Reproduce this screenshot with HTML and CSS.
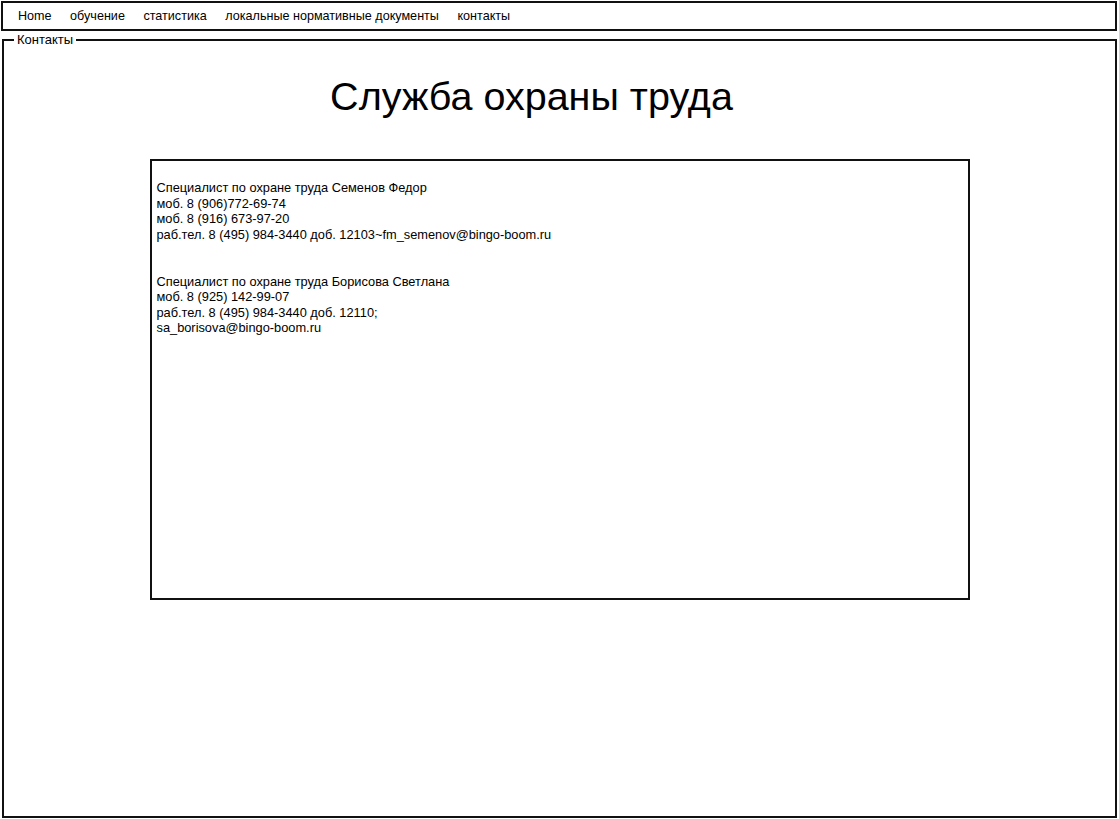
FILE: index.html
```html
<!DOCTYPE html>
<html lang="ru">
<head>
<meta charset="utf-8">
<title>Служба охраны труда</title>
<link rel="stylesheet" href="styles.css">
</head>
<body>
<nav class="menu">
  <span class="menu-item">Home</span>
  <span class="menu-item">обучение</span>
  <span class="menu-item">статистика</span>
  <span class="menu-item">локальные нормативные документы</span>
  <span class="menu-item">контакты</span>
</nav>
<fieldset class="group">
  <legend class="group-title">Контакты</legend>
  <h1 class="page-title">Служба охраны труда</h1>
  <div class="contacts">
    <p class="contact">Специалист по охране труда Семенов Федор<br>моб. 8 (906)772-69-74<br>моб. 8 (916) 673-97-20<br>раб.тел. 8 (495) 984-3440 доб. 12103~fm_semenov@bingo-boom.ru</p>
    <p class="contact">Специалист по охране труда Борисова Светлана<br>моб. 8 (925) 142-99-07<br>раб.тел. 8 (495) 984-3440 доб. 12110;<br>sa_borisova@bingo-boom.ru</p>
  </div>
</fieldset>
</body>
</html>
```
FILE: styles.css
```css
html, body {
  margin: 0;
  padding: 0;
  background: #fff;
}
body {
  font-family: "Liberation Sans", Arial, sans-serif;
  color: #000;
  width: 1119px;
  height: 819px;
  overflow: hidden;
}
.menu {
  box-sizing: border-box;
  margin: 1px 2px 0 1px;
  height: 30px;
  border: 2px solid #111;
  display: flex;
  align-items: center;
  padding-left: 15px;
  gap: 18.5px;
  font-size: 12.6px;
}
.group {
  box-sizing: border-box;
  margin: 2px 2px 0 2px;
  height: 785px;
  border: 2px solid #111;
  padding: 0;
  min-width: 0;
}
.group-title {
  font-size: 13px;
  margin-left: 10px;
  padding: 0 3px;
  line-height: 14px;
}
.page-title {
  margin: 27px 0 0 0;
  padding-right: 56px;
  text-align: center;
  font-weight: normal;
  font-size: 39.5px;
  line-height: 44px;
}
.contacts {
  box-sizing: border-box;
  width: 820px;
  height: 441px;
  margin: 41px auto 0 auto;
  border: 2px solid #111;
  padding: 19px 5px 0 5px;
  font-size: 12.8px;
  line-height: 15.6px;
}
.contact {
  margin: 0 0 31.2px 0;
}
```
